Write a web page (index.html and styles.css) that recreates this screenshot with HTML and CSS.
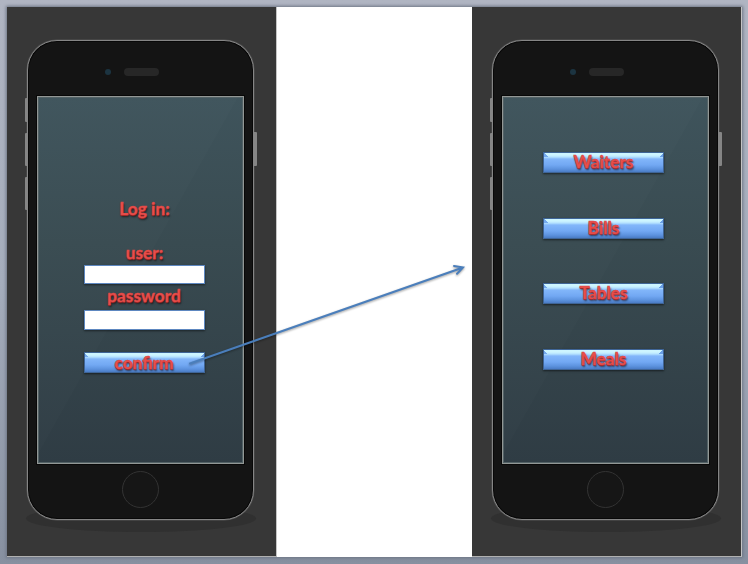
FILE: index.html
```html
<!DOCTYPE html>
<html lang="en">
<head>
<meta charset="utf-8">
<title>Waiter app flow</title>
<link rel="stylesheet" href="styles.css">
</head>
<body>
<main class="slide">
  <section class="panel">
    <div class="phone">
      <div class="side left"><i class="key short"></i><i class="key"></i><i class="key"></i></div>
      <div class="side right"><i class="key"></i></div>
      <header class="top"><span class="camera"></span><span class="speaker"></span></header>
      <form class="screen login">
        <h1 class="label title">Log in:</h1>
        <label class="label user" for="user">user:</label>
        <input class="field" id="user" type="text">
        <label class="label pass" for="pass">password</label>
        <input class="field second" id="pass" type="password">
        <button class="button" type="button"><span class="label">confirm</span></button>
      </form>
      <div class="home"></div>
    </div>
  </section>
  <section class="panel end">
    <div class="phone">
      <div class="side left"><i class="key short"></i><i class="key"></i><i class="key"></i></div>
      <div class="side right"><i class="key"></i></div>
      <header class="top"><span class="camera"></span><span class="speaker"></span></header>
      <nav class="screen menu">
        <button class="button" type="button"><span class="label">Waiters</span></button>
        <button class="button" type="button"><span class="label">Bills</span></button>
        <button class="button" type="button"><span class="label">Tables</span></button>
        <button class="button" type="button"><span class="label">Meals</span></button>
      </nav>
      <div class="home"></div>
    </div>
  </section>
</main>
<svg class="arrow" viewBox="0 0 748 564" aria-hidden="true">
  <path d="M190 363.5 463 267.5M454 266 463 267.4 457 273.8"/>
</svg>
</body>
</html>
```

FILE: styles.css
```css
* { box-sizing: border-box; }

body {
  margin: 0;
  padding: 7px;
  width: 748px;
  height: 564px;
  overflow: hidden;
  background: linear-gradient(#b0b5c2, #a5adbc 50%, #8790a0);
  font-family: Lato, "Liberation Sans", sans-serif;
}

.slide {
  display: flex;
  justify-content: space-between;
  width: 735px;
  height: 550px;
  background: #fff;
  box-shadow: 0 0 3px 1px #6c7483;
}

.panel {
  position: relative;
  z-index: 0;
  width: 270px;
  height: 550px;
  padding: 33px 0 0 20px;
  background: #373737;
  border-right: 1px solid #c4c4c4;
  border-bottom: 1px solid #b0b0b0;
}

.phone {
  position: relative;
  display: flex;
  flex-direction: column;
  align-items: center;
  width: 227px;
  height: 480px;
  border: 1px solid #858585;
  border-radius: 30px;
  background: #141414;
  box-shadow: inset 0 0 0 1px #080808, 0 0 0 .5px #555;
}

.phone::before {
  content: "";
  position: absolute;
  z-index: -1;
  left: -2px;
  top: 464px;
  width: 230px;
  height: 27px;
  border-radius: 50%;
  background: #303030;
}

.side {
  position: absolute;
  display: flex;
  flex-direction: column;
  gap: 11px;
}
.side.left { left: -3px; top: 57px; }
.side.right { right: -4px; top: 91px; }
.key { width: 3px; height: 33px; background: #858585; border-radius: 1px 0 0 1px; }
.key.short { height: 24px; }
.right .key { height: 34px; border-radius: 0 1px 1px 0; }

.top {
  display: flex;
  align-items: center;
  gap: 13px;
  align-self: flex-start;
  height: 55px;
  padding: 7px 0 0 77px;
}
.camera { width: 6px; height: 6px; border-radius: 50%; background: #1c3441; }
.speaker { width: 35px; height: 8px; border-radius: 4px; background: #272727; }

.screen {
  display: flex;
  flex-direction: column;
  align-items: center;
  align-self: flex-start;
  width: 207px;
  height: 368px;
  margin: 0 0 0 9px;
  border: 1px solid #929795;
  background:
    linear-gradient(to bottom right, rgba(255, 255, 255, .01) 48.6%, transparent 48.9%),
    linear-gradient(#3f545c, #394b51 40%, #2f3c44);
  box-shadow: inset 0 0 0 1px #536266, 0 0 0 1px #080808;
}

.label {
  height: 20px;
  margin: 0;
  font-size: 17.3px;
  line-height: 20px;
  font-weight: 700;
  white-space: nowrap;
  color: #e84f4c;
  -webkit-text-stroke: .4px #dc4441;
  text-shadow: 0 1px 1px #a02020, 1px 2px 2px rgba(0, 0, 0, .6);
}

.login { padding: 102px 0 0 7px; }
.title, .user { position: relative; left: .5px; }
.title { margin-bottom: 24px; }
.user { margin-bottom: 2px; }
.pass { margin: 2px 0 4px; }

.field {
  width: 121px;
  height: 19px;
  padding: 0 4px;
  border: 1px solid #5d87c0;
  background: #fff;
  font: 12px Lato, sans-serif;
  box-shadow: 0 1px 2px rgba(0, 0, 0, .5);
}
.second { height: 20px; margin-bottom: 22px; }

.button {
  display: flex;
  justify-content: center;
  align-items: center;
  flex: none;
  width: 121px;
  height: 21px;
  padding: 0;
  border: 1px solid #3f6597;
  font-family: inherit;
  background:
    linear-gradient(45deg, #74a9ee 50%, transparent 50%) 0 0 / 4px 4px no-repeat,
    linear-gradient(-45deg, #6a9fe6 50%, transparent 50%) 100% 0 / 4px 4px no-repeat,
    linear-gradient(#cdf5ff 0 2px, #b5e2ff 4px, #82b6fa 6px, #72a8f3 12px, #5d93df 16px, #4a7cc5);
  box-shadow: 0 1px 2px rgba(0, 0, 0, .55);
}

.menu { gap: 45px; padding: 55px 4px 0 0; }
.menu .button:nth-child(3) { margin-top: -1px; }
.menu .label { margin-top: -1px; }

.home {
  width: 37px;
  height: 37px;
  margin-top: 7px;
  border: 1px solid #333;
  border-radius: 50%;
  background: #161616;
}

.arrow {
  position: absolute;
  left: 0;
  top: 0;
  z-index: 2;
  width: 748px;
  height: 564px;
  fill: none;
  stroke: #4a7ebb;
  stroke-width: 2;
  stroke-linecap: round;
  pointer-events: none;
  filter: drop-shadow(0 1px 1px rgba(0, 0, 0, .4));
}
```
